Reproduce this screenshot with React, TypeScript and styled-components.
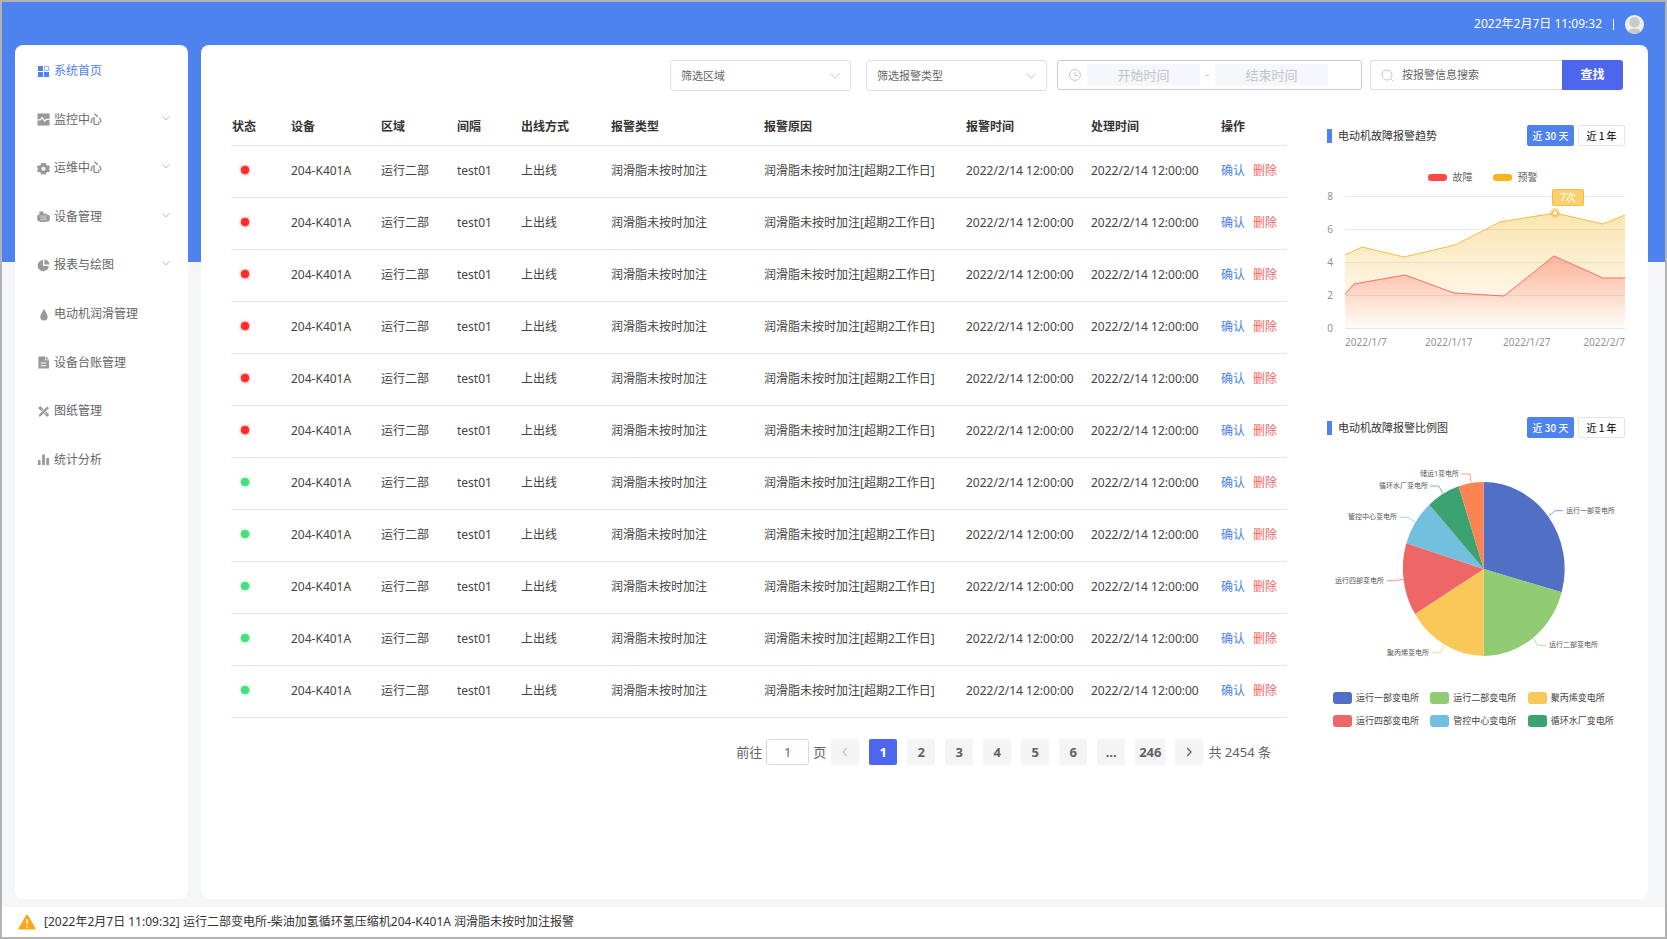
import React from 'react';
import styled, { createGlobalStyle } from 'styled-components';

const blue = '#4e82ee';
const indigo = '#4c66ed';

const GlobalStyle = createGlobalStyle`
  *, *::before, *::after { box-sizing: border-box; }
  body {
    margin: 0;
    font: 12px/16px "Noto Sans", "Noto Sans CJK SC", sans-serif;
    color: #4a4a4a;
  }
  button, input, select { font: inherit; color: inherit; }
  h2, ul, nav, p { margin: 0; padding: 0; }
`;

const Frame = styled.div`
  min-height: 100vh;
  display: flex;
  flex-direction: column;
  border: 2px solid #b3b3b3;
  background: linear-gradient(${blue} 260px, #f5f6f8 260px);
`;

const Header = styled.header`
  height: 43px;
  padding: 1px 21px 0 0;
  display: flex;
  align-items: center;
  justify-content: flex-end;
  gap: 11px;
  color: #fff;
`;

const Divider = styled.span`
  width: 1px;
  height: 11px;
  background: #fff;
`;

const AvatarButton = styled.button`
  width: 19px;
  height: 19px;
  padding: 0;
  border: 0;
  border-radius: 50%;
  background: none;
  svg { display: block; }
`;

const Body = styled.div`
  flex: 1;
  display: flex;
  gap: 13px;
  padding: 0 17px 8px 13px;
`;

const Sidebar = styled.aside`
  flex: none;
  width: 173px;
  padding-top: 2px;
  border-radius: 8px;
  background: #fff;
`;

const Menu = styled.nav`
  height: 437px;
  display: grid;
  grid-auto-rows: 1fr;
`;

const MenuItem = styled.a<{ $active?: boolean }>`
  display: flex;
  align-items: center;
  gap: 4px;
  padding: 0 18px 0 22px;
  border: 0;
  background: none;
  text-align: left;
  text-decoration: none;
  color: ${p => (p.$active ? blue : '#666')};
  svg:first-child { color: ${p => (p.$active ? blue : '#999')}; }
`;

const MenuLabel = styled.span`
  flex: 1;
`;

const MenuChevron = styled.svg`
  color: #b5b8bd;
  margin-bottom: 4px;
`;

const Main = styled.main`
  flex: 1;
  min-width: 0;
  padding: 15px 23px 24px 30px;
  border-radius: 8px;
  background: #fff;
`;

const Toolbar = styled.form`
  display: flex;
  justify-content: flex-end;
  gap: 8px;
  padding-right: 2px;
`;

const SelectWrap = styled.div`
  position: relative;
  width: 181px;
  height: 31px;
  margin-right: 7px;
  svg {
    position: absolute;
    right: 11px;
    top: 11px;
    color: #c0c4cc;
    pointer-events: none;
  }
`;

const Select = styled.select`
  width: 100%;
  height: 100%;
  padding: 0 28px 0 10px;
  appearance: none;
  border: 1px solid #dcdfe6;
  border-radius: 3px;
  background: #fff;
  font-size: 11px;
  color: #666;
`;

const DateRange = styled.div`
  width: 305px;
  height: 30px;
  margin-left: -5px;
  padding-left: 11px;
  display: flex;
  align-items: center;
  border: 1px solid #c8ccd4;
  border-radius: 3px;
  color: #c0c4cc;
  svg { margin-right: 6px; }
`;

const DateInput = styled.input`
  width: 113px;
  height: 22px;
  padding: 0;
  border: 0;
  background: #f5f7fa;
  text-align: center;
  font-size: 13px;
  &::placeholder { color: #c0c4cc; }
`;

const Dash = styled.span`
  width: 15px;
  text-align: center;
`;

const Search = styled.div`
  width: 253px;
  height: 30px;
  display: flex;
`;

const SearchField = styled.label`
  flex: 1;
  min-width: 0;
  display: flex;
  align-items: center;
  gap: 8px;
  padding-left: 10px;
  border: 1px solid #dcdfe6;
  border-right: 0;
  border-radius: 3px 0 0 3px;
  color: #c0c4cc;
  svg { flex: none; }
`;

const SearchInput = styled.input`
  flex: 1;
  min-width: 0;
  padding: 0;
  border: 0;
  background: none;
  font-size: 11px;
  &::placeholder { color: #666; opacity: 1; }
`;

const SearchButton = styled.button`
  width: 61px;
  border: 0;
  border-radius: 0 3px 3px 0;
  background: ${indigo};
  color: #fff;
  font-weight: 700;
`;

const Content = styled.div`
  margin-top: 19px;
  display: grid;
  grid-template-columns: minmax(0, 1056fr) minmax(0, 298fr);
  column-gap: 40px;
  align-items: start;
`;

const Table = styled.table`
  width: 100%;
  table-layout: fixed;
  border-collapse: collapse;
`;

const Col = styled.col<{ $w: number }>`
  width: ${p => p.$w}px;
`;

const Th = styled.th`
  height: 35px;
  padding: 0 0 0 1px;
  border-bottom: 1px solid #e6e6e6;
  text-align: left;
  font-weight: 700;
  color: #333;
  white-space: nowrap;
`;

const Td = styled.td`
  height: 52px;
  padding: 0 0 0 1px;
  border-bottom: 1px solid #e6e6e6;
  color: #444;
  white-space: nowrap;
`;

const StatusDot = styled.span<{ $ok: boolean }>`
  display: block;
  width: 8px;
  height: 8px;
  margin: 0 0 2px 9px;
  border-radius: 50%;
  background: ${p => (p.$ok ? '#43e07c' : '#ff2b2b')};
  box-shadow: 0 0 3px ${p => (p.$ok ? '#43e07c' : '#ff2b2b')};
`;

const Action = styled.button<{ $danger?: boolean }>`
  margin-right: 8px;
  padding: 0;
  border: 0;
  background: none;
  color: ${p => (p.$danger ? '#f06565' : '#4a7ef0')};
`;

const Pager = styled.nav`
  margin-top: 21px;
  padding-right: 16px;
  display: flex;
  align-items: center;
  justify-content: flex-end;
  gap: 10px;
  font-size: 13px;
  color: #606266;
`;

const PagerGroup = styled.div`
  display: flex;
  align-items: center;
  gap: 5px;
`;

const Jump = styled.label`
  display: flex;
  align-items: center;
  gap: 4px;
`;

const JumpInput = styled.input`
  width: 43px;
  height: 26px;
  padding: 0;
  border: 1px solid #d5d8df;
  border-radius: 3px;
  background: #fff;
  text-align: center;
`;

const PageButton = styled.button<{ $current?: boolean; $dim?: boolean }>`
  min-width: 28px;
  height: 26px;
  padding: 0 4px;
  display: grid;
  place-items: center;
  border: 0;
  border-radius: 2px;
  background: ${p => (p.$current ? indigo : '#f4f4f5')};
  color: ${p => (p.$current ? '#fff' : p.$dim ? '#c0c4cc' : '#606266')};
  font-weight: 700;
`;

const Charts = styled.aside`
  padding-top: 15px;
`;

const Panel = styled.section`
  & + & { margin-top: 65px; }
`;

const PanelHead = styled.div`
  display: flex;
  align-items: center;
  gap: 4px;
  height: 21px;
`;

const PanelTitle = styled.h2`
  flex: 1;
  display: flex;
  align-items: center;
  gap: 6px;
  font-size: 11px;
  font-weight: 400;
  color: #333;
  &::before {
    content: "";
    width: 5px;
    height: 14px;
    background: ${blue};
  }
`;

const RangeButton = styled.button<{ $active?: boolean }>`
  width: 47px;
  height: 21px;
  padding: 0;
  border: 1px solid ${p => (p.$active ? blue : '#e3e5e8')};
  border-radius: 2px;
  background: ${p => (p.$active ? blue : '#fff')};
  color: ${p => (p.$active ? '#fff' : '#222')};
  font: 500 10px/16px "Noto Sans CJK SC", sans-serif;
`;

const LineLegend = styled.ul`
  margin-top: 24px;
  padding-left: 13px;
  display: flex;
  justify-content: center;
  gap: 20px;
  list-style: none;
`;

const LineKey = styled.li<{ $color: string }>`
  display: flex;
  align-items: center;
  gap: 6px;
  font-size: 10px;
  line-height: 14px;
  color: #666;
  &::before {
    content: "";
    width: 19px;
    height: 7px;
    border-radius: 3px;
    background: ${p => p.$color};
  }
`;

const Chart = styled.svg<{ $top: number }>`
  display: block;
  width: 100%;
  height: auto;
  margin-top: ${p => p.$top}px;
  overflow: visible;
`;

const TickText = styled.text`
  font-size: 10px;
  fill: #909399;
`;

const SliceText = styled.text`
  font-size: 7px;
  fill: #555;
`;

const PieLegend = styled.ul`
  margin-top: 25px;
  padding-left: 6px;
  display: grid;
  grid-template-columns: repeat(3, 1fr);
  row-gap: 7px;
  list-style: none;
`;

const PieKey = styled.li<{ $color: string }>`
  display: flex;
  align-items: center;
  gap: 4px;
  font-size: 9px;
  line-height: 16px;
  color: #444;
  white-space: nowrap;
  &::before {
    content: "";
    width: 19px;
    height: 12px;
    border-radius: 3px;
    background: ${p => p.$color};
  }
`;

const Notice = styled.footer`
  height: 30px;
  padding-left: 16px;
  display: flex;
  align-items: center;
  gap: 8px;
  background: #fff;
  color: #333;
`;

const Icon = ({ children }: { children: React.ReactNode }) => (
  <svg width="13" height="13" viewBox="0 0 14 14" fill="currentColor" aria-hidden="true">
    {children}
  </svg>
);

const Down = ({ size = 10 }: { size?: number }) => (
  <svg width={size} height={size} viewBox="0 0 10 10" fill="none" stroke="currentColor" aria-hidden="true">
    <path d="M.5 2.700 5 7.200l4.500-4.500" />
  </svg>
);

const icons = {
  home: (
    <Icon>
      <path d="M1 1h5.500v5.500H1zM1 7.500h5.500V13H1zM7.500 7.500H13V13H7.500z" />
      <path d="M8 1.500h4.500V6H8z" fill="none" stroke="currentColor" opacity=".7" />
    </Icon>
  ),
  monitor: (
    <Icon>
      <path d="M.5 .5h13v13H.5z" />
      <path d="M.5 7.500h3L5.600 4.800l2.600 4L10 6.800h3.500" fill="none" stroke="#fff" strokeWidth="1.300" />
    </Icon>
  ),
  gear: (
    <Icon>
      <path
        fillRule="evenodd"
        d="M4.600 1.200h1.700L7 2l.7-.8h1.700l.8 2 .8.500 2-.2 1 2.300-1.300 1.500 1.300 1.500-1 2.300-2-.2-.8.500-.8 2H7.700L7 12.600l-.7.8H4.600l-.8-2-.8-.5-2 .2L0 8.800l1.300-1.500L0 5.800l1-2.300 2 .2.800-.5zM7 5.100a2.200 2.200 0 1 0 0 4.400 2.200 2.200 0 0 0 0-4.400"
      />
    </Icon>
  ),
  motor: (
    <Icon>
      <path d="M2.500 1.500h4.500V4h4v1.500h1.500l1.300 1v4.500l-1.300 1H11V13H3v-1H1.500L.3 11V6l1.200-1h1z" />
      <path d="M3.500 6.500h7M3.500 8.500h7M3.500 10.500h7" stroke="#fff" strokeWidth=".8" opacity=".75" />
    </Icon>
  ),
  pie: (
    <Icon>
      <path d="M6.500 1.200V7.500H12.700A6 6 0 1 1 6.500 1.200z" />
      <path d="M8 .5A6 6 0 0 1 13.300 6H8z" />
    </Icon>
  ),
  drop: (
    <Icon>
      <path d="M7.500 1C9 3.700 11.500 7 11.500 9.500a4 4 0 0 1-8 0C3.500 7 6 3.700 7.500 1z" />
    </Icon>
  ),
  doc: (
    <Icon>
      <path d="M1.500 .5h7.500v4h4v9H1.500zM9.800.5l3.200 3.200H9.800z" />
      <path d="M4 7.500h6M4 10.500h6" stroke="#fff" strokeWidth="1.100" />
    </Icon>
  ),
  tools: (
    <Icon>
      <path d="M1.200 3.200 3.500 1l9.700 9.500-2.200 2.300z" />
      <path d="m11 1.200 2.200 2.200-9 9L1 13.300l1-3.200z" stroke="#fff" strokeWidth=".9" />
      <path d="m4.200 5.500 1.200-1.200M8.600 10l1.200-1.200" stroke="#fff" strokeWidth=".7" />
    </Icon>
  ),
  bars: (
    <Icon>
      <path d="M1 7.500h2.800V13H1zM5.500 1.500h3V13h-3zM10 5.500h3V13h-3z" />
    </Icon>
  ),
};

const menu: { label: string; icon: React.ReactNode; active?: boolean; nested?: boolean }[] = [
  { label: '系统首页', icon: icons.home, active: true },
  { label: '监控中心', icon: icons.monitor, nested: true },
  { label: '运维中心', icon: icons.gear, nested: true },
  { label: '设备管理', icon: icons.motor, nested: true },
  { label: '报表与绘图', icon: icons.pie, nested: true },
  { label: '电动机润滑管理', icon: icons.drop },
  { label: '设备台账管理', icon: icons.doc },
  { label: '图纸管理', icon: icons.tools },
  { label: '统计分析', icon: icons.bars },
];

const columns: [string, number][] = [
  ['状态', 59],
  ['设备', 90],
  ['区域', 76],
  ['间隔', 64],
  ['出线方式', 90],
  ['报警类型', 153],
  ['报警原因', 202],
  ['报警时间', 125],
  ['处理时间', 130],
  ['操作', 67],
];

const alarms = Array.from({ length: 11 }, (_, i) => ({
  ok: i > 5,
  cells: [
    '204-K401A',
    '运行二部',
    'test01',
    '上出线',
    '润滑脂未按时加注',
    '润滑脂未按时加注[超期2工作日]',
    '2022/2/14 12:00:00',
    '2022/2/14 12:00:00',
  ],
}));

const pages = ['1', '2', '3', '4', '5', '6', '...', '246'];

const ticks = [8, 6, 4, 2, 0].map((value, i) => ({ value, y: 11 + i * 33 }));
const warnLine = 'M18 70 35 62 77 72 128 60 173 37 228 28 276 39 298 30';
const faultLine = 'M18 109 27 99 78 90 127 108 177 111 227 71 276 93 298 93';

const slices = [
  { name: '运行一部变电所', color: '#526fc6', to: [234.7, 132.3], line: '221.700,56 228.300,50.700 236,50.700', x: 239, y: 53, end: false },
  { name: '运行二部变电所', color: '#91cb74', to: [156.7, 196], line: '206,178 210.700,185.300 219,185.300', x: 222, y: 187, end: false },
  { name: '聚丙烯变电所', color: '#fac858', to: [88, 154], line: '117,185 113.700,192.700 105,192.700', x: 102, y: 195, end: true },
  { name: '运行四部变电所', color: '#ee6666', to: [79.3, 83.3], line: '76,119.300 68,120.700 60,120.700', x: 57, y: 123, end: true },
  { name: '管控中心变电所', color: '#73c0de', to: [102.3, 44.7], line: '88,62 81,57.300 73,57.300', x: 70, y: 59, end: true },
  { name: '循环水厂变电所', color: '#3ba272', to: [131.7, 26.3], line: '116,33.300 111.700,26 103,26', x: 101, y: 28, end: true },
  { name: '储运1变电所', color: '#fc8452', to: [156.7, 22], line: '144,22 143,14 134,14', x: 132, y: 16, end: true },
];

function PanelHeader({ title }: { title: string }) {
  return (
    <PanelHead>
      <PanelTitle>{title}</PanelTitle>
      <RangeButton type="button" $active>近 30 天</RangeButton>
      <RangeButton type="button">近 1 年</RangeButton>
    </PanelHead>
  );
}

function FilterSelect({ label }: { label: string }) {
  return (
    <SelectWrap>
      <Select aria-label={label} defaultValue="">
        <option value="">{label}</option>
      </Select>
      <Down />
    </SelectWrap>
  );
}

function TrendChart() {
  return (
    <Chart $top={1} viewBox="0 0 298 167" role="img" aria-label="电动机故障报警趋势">
      <defs>
        <linearGradient id="warnFill" x1="0" y1="0" x2="0" y2="1">
          <stop offset="0" stopColor="#f5bf45" stopOpacity=".42" />
          <stop offset="1" stopColor="#f5bf45" stopOpacity="0" />
        </linearGradient>
        <linearGradient id="faultFill" x1="0" y1="0" x2="0" y2="1">
          <stop offset="0" stopColor="#ff7b6b" stopOpacity=".5" />
          <stop offset="1" stopColor="#ff7b6b" stopOpacity="0" />
        </linearGradient>
      </defs>
      {ticks.map(t => (
        <g key={t.value}>
          <path d={`M18 ${t.y + 0.5}H298`} stroke="#e6e8eb" />
          <TickText x="3" y={t.y + 4} textAnchor="middle">{t.value}</TickText>
        </g>
      ))}
      <path d={`${warnLine}V151H18z`} fill="url(#warnFill)" />
      <path d={warnLine} fill="none" stroke="#f3bd42" />
      <path d={`${faultLine}V143H18z`} fill="url(#faultFill)" />
      <path d={faultLine} fill="none" stroke="#ff6a66" />
      <circle cx="228" cy="28" r="5" fill="#f5bf45" opacity=".5" />
      <circle cx="228" cy="28" r="2.500" fill="#fff" stroke="#f3b21d" />
      <rect x="225.500" y="4.500" width="31" height="16" rx="1.500" fill="#f8d070" stroke="#f3bd42" />
      <text x="241" y="16" textAnchor="middle" fontSize="10" fill="#fff">7次</text>
      <TickText x="18" y="161">2022/1/7</TickText>
      <TickText x="98" y="161">2022/1/17</TickText>
      <TickText x="176" y="161">2022/1/27</TickText>
      <TickText x="298" y="161" textAnchor="end">2022/2/7</TickText>
    </Chart>
  );
}

function PieChart() {
  return (
    <Chart $top={22} viewBox="0 0 298 205" role="img" aria-label="电动机故障报警比例图">
      {slices.map((s, i) => {
        const from = slices[(i + slices.length - 1) % slices.length].to;
        return (
          <g key={s.name}>
            <path
              d={`M156.700 109L${from[0]} ${from[1]}A81.300 87 0 0 1 ${s.to[0]} ${s.to[1]}z`}
              fill={s.color}
            />
            <polyline points={s.line} fill="none" stroke={s.color} strokeWidth=".7" />
            <SliceText x={s.x} y={s.y} textAnchor={s.end ? 'end' : 'start'}>{s.name}</SliceText>
          </g>
        );
      })}
    </Chart>
  );
}

export default function App() {
  return (
    <Frame>
      <GlobalStyle />
      <Header>
        <time>2022年2月7日 11:09:32</time>
        <Divider />
        <AvatarButton type="button" aria-label="用户">
          <svg width="19" height="19" viewBox="0 0 19 19">
            <clipPath id="avatarClip"><circle cx="9.500" cy="9.500" r="9.500" /></clipPath>
            <g clipPath="url(#avatarClip)">
              <path d="M0 0h19v19H0z" fill="#efefef" />
              <circle cx="9.500" cy="7.200" r="5.300" fill="#c9c9c9" />
              <ellipse cx="9.500" cy="17.500" rx="7" ry="4" fill="#c9c9c9" />
            </g>
          </svg>
        </AvatarButton>
      </Header>
      <Body>
        <Sidebar>
          <Menu>
            {menu.map(m => (
              <MenuItem
                key={m.label}
                $active={m.active}
                {...(m.nested ? { as: 'button' as const, type: 'button' } : { href: '#' })}
              >
                {m.icon}
                <MenuLabel>{m.label}</MenuLabel>
                {m.nested && (
                  <MenuChevron width="8" height="8" viewBox="0 0 8 8" fill="none" stroke="currentColor">
                    <path d="M.4 2.300 4 5.900l3.600-3.600" />
                  </MenuChevron>
                )}
              </MenuItem>
            ))}
          </Menu>
        </Sidebar>
        <Main>
          <Toolbar onSubmit={e => e.preventDefault()}>
            <FilterSelect label="筛选区域" />
            <FilterSelect label="筛选报警类型" />
            <DateRange>
              <svg width="12" height="12" viewBox="0 0 12 12" fill="none" stroke="currentColor">
                <circle cx="6" cy="6" r="5.400" />
                <path d="M6 2.800V6.500h3" />
              </svg>
              <DateInput aria-label="开始时间" placeholder="开始时间" />
              <Dash>-</Dash>
              <DateInput aria-label="结束时间" placeholder="结束时间" />
            </DateRange>
            <Search>
              <SearchField>
                <svg width="13" height="13" viewBox="0 0 13 13" fill="none" stroke="currentColor">
                  <circle cx="6" cy="6" r="5" />
                  <path d="m9.600 9.600 2.900 2.900" />
                </svg>
                <SearchInput aria-label="按报警信息搜索" placeholder="按报警信息搜索" />
              </SearchField>
              <SearchButton type="submit">查找</SearchButton>
            </Search>
          </Toolbar>
          <Content>
            <div>
              <Table>
                <colgroup>
                  {columns.map(([name, w]) => <Col key={name} $w={w} />)}
                </colgroup>
                <thead>
                  <tr>{columns.map(([name]) => <Th key={name} scope="col">{name}</Th>)}</tr>
                </thead>
                <tbody>
                  {alarms.map((row, i) => (
                    <tr key={i}>
                      <Td><StatusDot $ok={row.ok} role="img" aria-label={row.ok ? '正常' : '报警'} /></Td>
                      {row.cells.map((c, j) => <Td key={j}>{c}</Td>)}
                      <Td>
                        <Action type="button">确认</Action>
                        <Action type="button" $danger>删除</Action>
                      </Td>
                    </tr>
                  ))}
                </tbody>
              </Table>
              <Pager aria-label="分页">
                <PagerGroup>
                  <Jump>
                    前往
                    <JumpInput defaultValue="1" />
                    页
                  </Jump>
                  <PageButton type="button" $dim aria-label="上一页">
                    <svg width="10" height="10" viewBox="0 0 10 10" fill="none" stroke="currentColor" strokeWidth="1.200">
                      <path d="M6.800 1 3 5l3.800 4" />
                    </svg>
                  </PageButton>
                </PagerGroup>
                {pages.map(p => (
                  <PageButton key={p} type="button" $current={p === '1'}>{p}</PageButton>
                ))}
                <PagerGroup>
                  <PageButton type="button" aria-label="下一页">
                    <svg width="10" height="10" viewBox="0 0 10 10" fill="none" stroke="currentColor" strokeWidth="1.300">
                      <path d="M3.200 1 7 5 3.200 9" />
                    </svg>
                  </PageButton>
                  <span>共 2454 条</span>
                </PagerGroup>
              </Pager>
            </div>
            <Charts>
              <Panel>
                <PanelHeader title="电动机故障报警趋势" />
                <LineLegend>
                  <LineKey $color="#ff4848">故障</LineKey>
                  <LineKey $color="#f5b51b">预警</LineKey>
                </LineLegend>
                <TrendChart />
              </Panel>
              <Panel>
                <PanelHeader title="电动机故障报警比例图" />
                <PieChart />
                <PieLegend>
                  {slices.slice(0, 6).map(s => <PieKey key={s.name} $color={s.color}>{s.name}</PieKey>)}
                </PieLegend>
              </Panel>
            </Charts>
          </Content>
        </Main>
      </Body>
      <Notice role="status">
        <svg width="18" height="16" viewBox="0 0 18 16" aria-hidden="true">
          <path d="M9 1.500 16.500 14.500h-15z" fill="#fba71b" stroke="#fba71b" strokeWidth="2" strokeLinejoin="round" />
          <path d="M9 5v5.500M9 12v1.500" stroke="#fff" strokeWidth="1.300" />
        </svg>
        <p>[2022年2月7日 11:09:32] 运行二部变电所-柴油加氢循环氢压缩机204-K401A 润滑脂未按时加注报警</p>
      </Notice>
    </Frame>
  );
}
